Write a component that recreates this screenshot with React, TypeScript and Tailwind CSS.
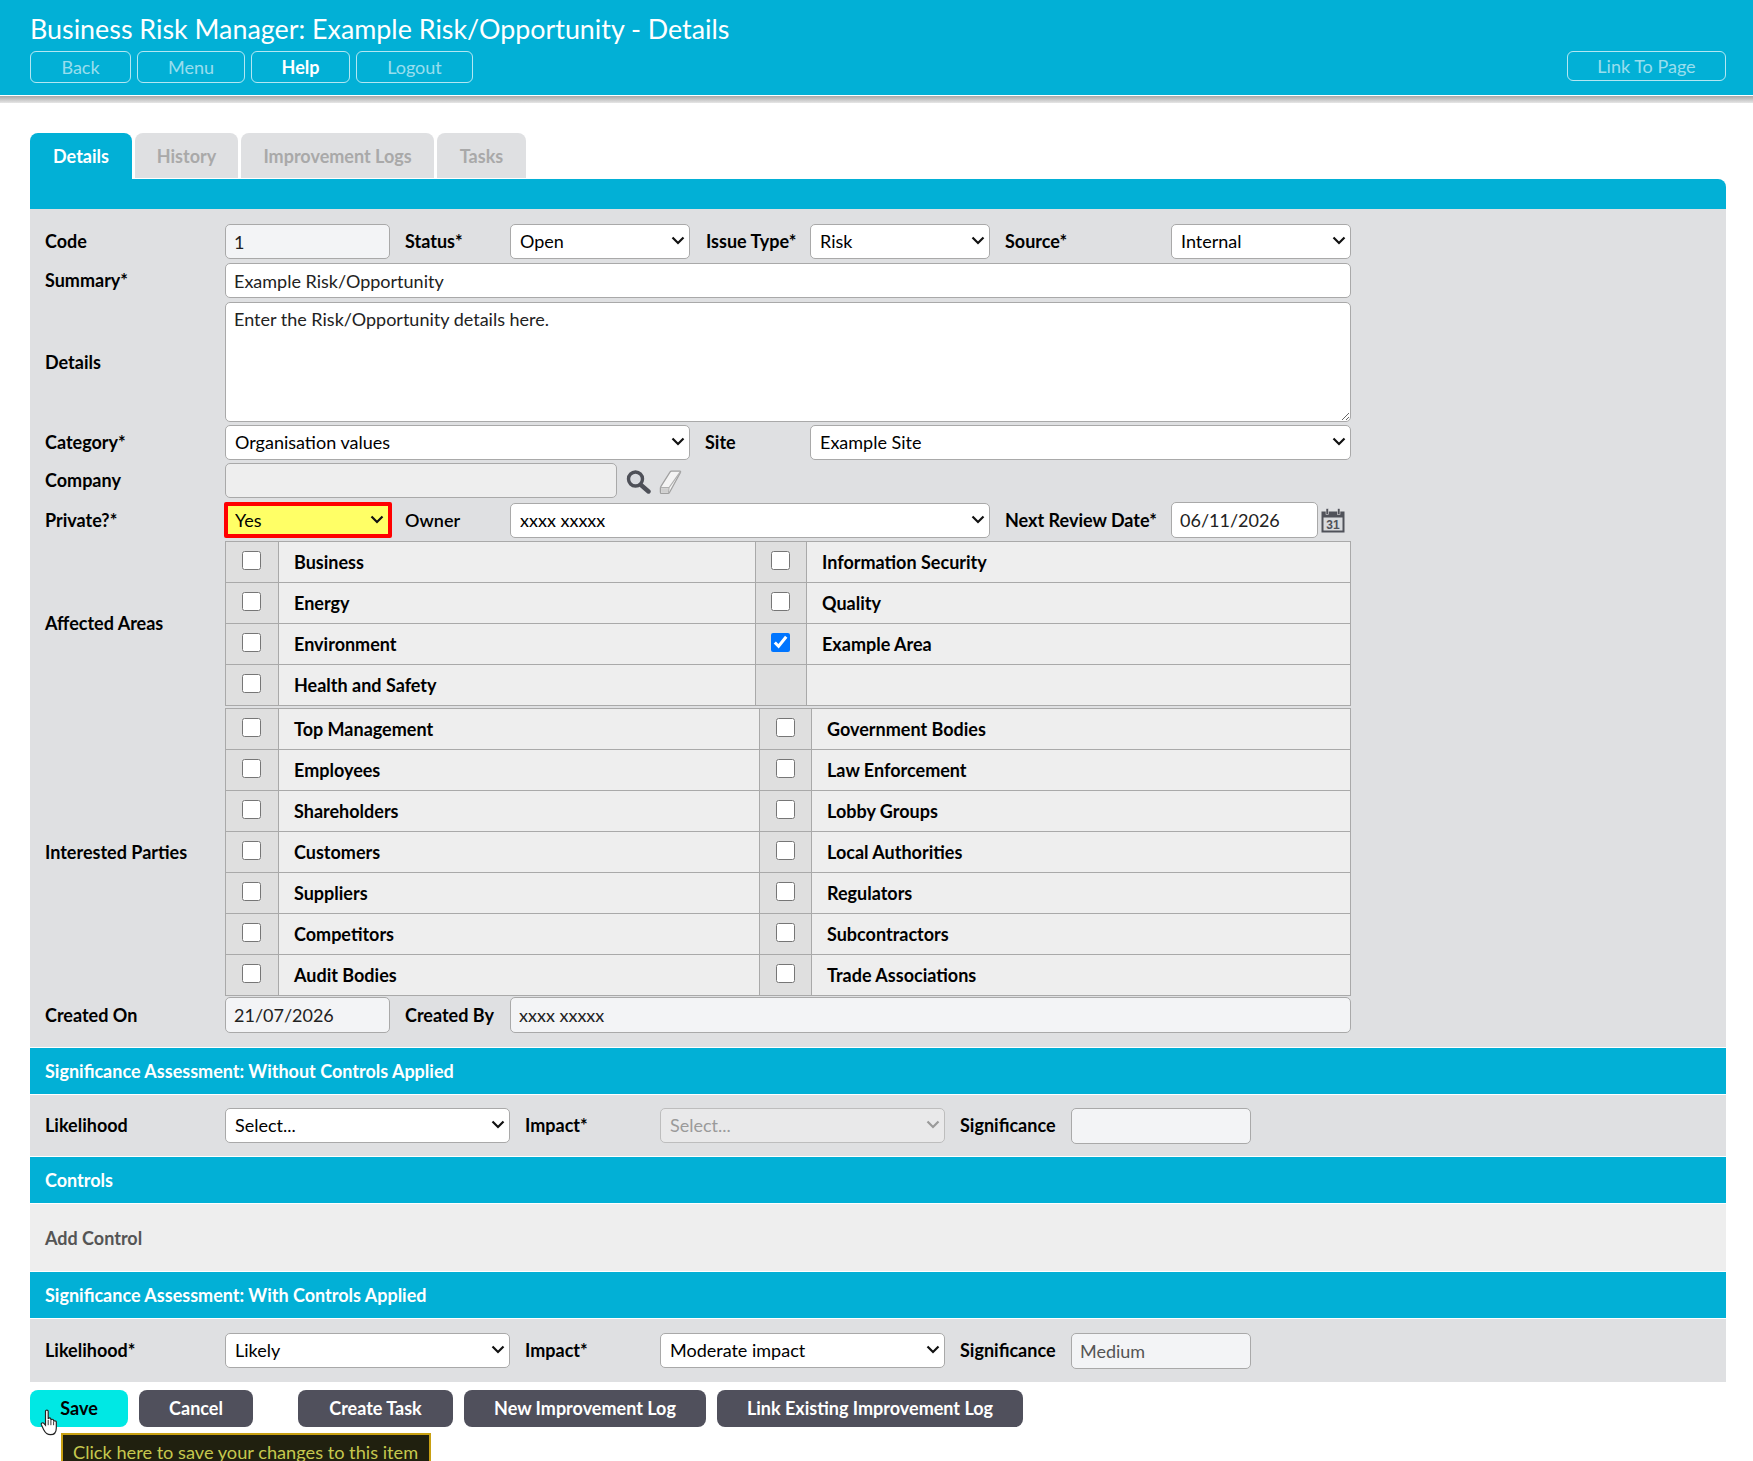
import React from "react";

const labelCls = "text-[18px] font-bold text-black whitespace-nowrap";
const inputCls = "h-[35px] rounded-[5px] border border-[#a9a9a9] px-[8px] text-[18px] text-[#222] outline-none";

function Sel({
  value,
  width,
  className = "",
  chevron = "right-[5px] top-[12px]",
  disabled,
}: {
  value: string;
  width: string;
  className?: string;
  chevron?: string;
  disabled?: boolean;
}) {
  return (
    <span className={`relative block h-[35px] ${width}`}>
      <select
        disabled={disabled}
        defaultValue={value}
        className={`h-full w-full appearance-none rounded-[5px] border border-[#a9a9a9] bg-white pl-[9px] text-[18px] text-black outline-none ${className}`}
      >
        <option>{value}</option>
      </select>
      <svg width="14" height="9" viewBox="0 0 14 9" className={`pointer-events-none absolute ${chevron}`} fill="none">
        <path d="M1.5 1.5 L7 7 L12.5 1.5" stroke={disabled ? "#9a9a9a" : "#111"} strokeWidth="2.2" />
      </svg>
    </span>
  );
}

function Cb({ checked }: { checked?: boolean }) {
  return <input type="checkbox" defaultChecked={checked} className="-ml-[1px] -mt-[3px] h-[19px] w-[19px]" />;
}

function CheckTable({
  rows,
  widths,
}: {
  rows: [string, string | null, boolean?][];
  widths: [string, string];
}) {
  return (
    <div className="w-[1126px] border-x border-t border-[#a9a9a9]">
      {rows.map(([a, b, checked]) => (
        <div key={a} className="flex h-[41px] border-b border-[#a9a9a9]">
          <div className="flex w-[53px] items-center justify-center border-r border-[#a9a9a9] bg-[#dfdfdf]">
            <Cb />
          </div>
          <div className={`flex items-center bg-[#eeeeee] pl-[15px] ${labelCls} ${widths[0]}`}>{a}</div>
          <div className={`flex items-center justify-center border-x border-[#a9a9a9] bg-[#dfdfdf] ${widths[1]}`}>
            {b !== null && <Cb checked={checked} />}
          </div>
          <div className={`flex flex-1 items-center bg-[#eeeeee] pl-[15px] ${labelCls}`}>{b}</div>
        </div>
      ))}
    </div>
  );
}

function SectionBar({ children }: { children: React.ReactNode }) {
  return (
    <div className="flex h-[48px] items-center border-y border-white bg-[#02b0d6] pl-[15px] text-[18px] font-bold text-white">
      {children}
    </div>
  );
}

function HeadBtn({ children, className }: { children: React.ReactNode; className: string }) {
  return (
    <button className={`rounded-[6px] border border-white/70 text-[18px] ${className}`}>{children}</button>
  );
}

function FootBtn({ children, className }: { children: React.ReactNode; className: string }) {
  return (
    <button className={`h-[37px] rounded-[8px] bg-[#50505c] text-[18px] font-bold text-white ${className}`}>
      {children}
    </button>
  );
}

function SearchIcon() {
  return (
    <svg width="25" height="24" viewBox="0 0 25 24" fill="none">
      <circle cx="9.5" cy="9" r="7" stroke="#4e5058" strokeWidth="3.4" fill="#d9dbe0" />
      <path d="M15 15 L22.5 21.5" stroke="#4e5058" strokeWidth="4.4" strokeLinecap="round" />
    </svg>
  );
}

function EraserIcon() {
  return (
    <svg width="23" height="24" viewBox="0 0 21 23">
      <path d="M11.5 1 L19.5 1 Q20.5 1 20 2.5 L9.5 21.5 Q9 22.5 8 22.5 L2 22.5 Q0.8 22.5 0.8 21 L0.8 17.5 Q0.8 16.5 1.5 15.5 L10 2 Q10.6 1 11.5 1 Z" fill="#f4f4f4" stroke="#a0a0a0" strokeWidth="1.2" />
      <path d="M1 17 L9 17 L20 1.5 M9 17 L8.6 22.3" fill="none" stroke="#b0b0b0" strokeWidth="1.2" />
      <path d="M1.4 17.6 L8.4 17.6 L8 21.8 L1.6 21.8 Z" fill="#cfcfcf" />
    </svg>
  );
}

function CalendarIcon() {
  return (
    <svg width="24" height="25" viewBox="0 0 24 25">
      <rect x="0.5" y="3.5" width="23" height="21" fill="#50525a" />
      <rect x="2.5" y="9.5" width="19" height="13" fill="#d9dbde" />
      <rect x="5" y="0.5" width="2.5" height="6" fill="#50525a" stroke="#dfe0e2" strokeWidth="0.6" />
      <rect x="16.5" y="0.5" width="2.5" height="6" fill="#50525a" stroke="#dfe0e2" strokeWidth="0.6" />
      <text x="12" y="21" textAnchor="middle" fontSize="12" fontWeight="700" fill="#50525a" fontFamily="Liberation Sans, sans-serif">31</text>
    </svg>
  );
}

function HandCursor() {
  return (
    <svg width="20" height="27" viewBox="0 0 22 30" className="absolute left-[10px] top-[19px]">
      <path
        d="M6 2.5 C6 0.8 9 0.8 9 2.5 L9 11 C9 9.5 12 9.5 12 11 L12 12.5 C12 11 15 11 15 12.5 L15 14 C15 12.8 18 12.8 18 14.2 L18 21 C18 25 16 28.5 11.5 28.5 C7 28.5 5.5 26 4 23 L1.4 17.5 C0.6 15.6 3 14.5 4.2 16 L6 18 Z"
        fill="#fff"
        stroke="#222"
        strokeWidth="1.3"
      />
      <path d="M9 12 V18 M12 12.5 V18 M15 14 V18" stroke="#222" strokeWidth="1" />
    </svg>
  );
}

export default function App() {
  return (
    <div className="relative h-[1461px] overflow-hidden bg-white font-['Lato','Liberation_Sans',sans-serif]">
      <header className="h-[95px] bg-[#02b0d6] pl-[30px] pr-[27px] pt-[11px]">
        <h1 className="h-[36px] text-[26.85px] leading-[36px] text-white">
          Business Risk Manager: Example Risk/Opportunity - Details
        </h1>
        <div className="mt-[4px] flex items-start justify-between">
          <div className="flex gap-[6px]">
            <HeadBtn className="h-[32px] w-[101px] text-white/60">Back</HeadBtn>
            <HeadBtn className="h-[32px] w-[108px] text-white/60">Menu</HeadBtn>
            <HeadBtn className="h-[32px] w-[99px] border-white font-bold text-white">Help</HeadBtn>
            <HeadBtn className="h-[32px] w-[117px] text-white/60">Logout</HeadBtn>
          </div>
          <HeadBtn className="h-[30px] w-[159px] text-white/60">Link To Page</HeadBtn>
        </div>
      </header>
      <div className="h-[8px] border-t border-white bg-gradient-to-b from-[#a8a8a8] to-[#e6e6e6]" />

      <main className="ml-[30px] mr-[27px] mt-[30px]">
        <div className="flex h-[46px] items-start gap-[3px] text-[18px] font-bold">
          <div className="flex h-[46px] w-[102px] items-center justify-center rounded-t-[8px] bg-[#02b0d6] pt-[1px] text-white">
            Details
          </div>
          <div className="flex h-[45px] w-[103px] items-center justify-center rounded-t-[8px] bg-[#dfe0e2] pt-[2px] text-[#a9a9a9]">
            History
          </div>
          <div className="flex h-[45px] w-[193px] items-center justify-center rounded-t-[8px] bg-[#dfe0e2] pt-[2px] text-[#a9a9a9]">
            Improvement Logs
          </div>
          <div className="flex h-[45px] w-[89px] items-center justify-center rounded-t-[8px] bg-[#dfe0e2] pt-[2px] text-[#a9a9a9]">
            Tasks
          </div>
        </div>
        <div className="h-[30px] rounded-tr-[8px] bg-[#02b0d6]" />

        <div className="bg-[#dfe0e2] pb-[14px] pt-[15px]">
          <div className="flex items-center pl-[15px]">
            <span className={`w-[180px] ${labelCls}`}>Code</span>
            <input readOnly value="1" className={`${inputCls} w-[165px] bg-[#f3f4f6]`} />
            <span className={`w-[120px] pl-[15px] ${labelCls}`}>Status*</span>
            <Sel value="Open" width="w-[180px]" />
            <span className={`w-[120px] pl-[16px] ${labelCls}`}>Issue Type*</span>
            <Sel value="Risk" width="w-[180px]" />
            <span className={`w-[181px] pl-[15px] ${labelCls}`}>Source*</span>
            <Sel value="Internal" width="w-[180px]" />
          </div>
          <div className="mt-[4px] flex items-center pl-[15px]">
            <span className={`w-[180px] ${labelCls}`}>Summary*</span>
            <input readOnly value="Example Risk/Opportunity" className={`${inputCls} w-[1126px] bg-white`} />
          </div>
          <div className="mt-[4px] flex items-center pl-[15px]">
            <span className={`w-[180px] ${labelCls}`}>Details</span>
            <textarea
              readOnly
              value="Enter the Risk/Opportunity details here."
              className={`${inputCls} h-[120px] w-[1126px] bg-white py-[3px]`}
            />
          </div>
          <div className="mt-[3px] flex items-center pl-[15px]">
            <span className={`w-[180px] ${labelCls}`}>Category*</span>
            <Sel value="Organisation values" width="w-[465px]" />
            <span className={`w-[120px] pl-[15px] ${labelCls}`}>Site</span>
            <Sel value="Example Site" width="w-[541px]" />
          </div>
          <div className="mt-[3px] flex items-center pl-[15px]">
            <span className={`w-[180px] ${labelCls}`}>Company</span>
            <input readOnly className={`${inputCls} w-[392px] bg-[#eeeeee]`} />
            <span className="ml-[9px] mt-[2px] flex items-center gap-[8px]">
              <SearchIcon />
              <EraserIcon />
            </span>
          </div>
          <div className="mt-[4px] flex items-center pl-[15px]">
            <span className={`w-[179px] ${labelCls}`}>Private?*</span>
            <Sel
              value="Yes"
              width="w-[168px] !h-[36px]"
              chevron="right-[8px] top-[13px]"
              className="!rounded-[2px] !border-[4px] !border-[#ff0000] !bg-[#ffff66] !pl-[7px]"
            />
            <span className="w-[118px] whitespace-nowrap pl-[13px] text-[18px] font-semibold text-black">Owner</span>
            <Sel value="xxxx xxxxx" width="w-[480px]" />
            <span className={`w-[181px] pl-[15px] ${labelCls}`}>Next Review Date*</span>
            <input readOnly value="06/11/2026" className={`${inputCls} h-[36px] w-[147px] bg-white`} />
            <span className="ml-[3px]">
              <CalendarIcon />
            </span>
          </div>

          <div className="mt-[3px] flex items-center pl-[15px]">
            <span className={`w-[180px] ${labelCls}`}>Affected Areas</span>
            <CheckTable
              widths={["w-[476px]", "w-[52px]"]}
              rows={[
                ["Business", "Information Security"],
                ["Energy", "Quality"],
                ["Environment", "Example Area", true],
                ["Health and Safety", null],
              ]}
            />
          </div>
          <div className="mt-[2px] flex items-center pl-[15px]">
            <span className={`w-[180px] ${labelCls}`}>Interested Parties</span>
            <CheckTable
              widths={["w-[480px]", "w-[53px]"]}
              rows={[
                ["Top Management", "Government Bodies"],
                ["Employees", "Law Enforcement"],
                ["Shareholders", "Lobby Groups"],
                ["Customers", "Local Authorities"],
                ["Suppliers", "Regulators"],
                ["Competitors", "Subcontractors"],
                ["Audit Bodies", "Trade Associations"],
              ]}
            />
          </div>

          <div className="mt-[1px] flex items-center pl-[15px]">
            <span className={`w-[180px] ${labelCls}`}>Created On</span>
            <input readOnly value="21/07/2026" className={`${inputCls} h-[36px] w-[165px] bg-[#f3f4f6]`} />
            <span className={`w-[120px] pl-[15px] ${labelCls}`}>Created By</span>
            <input readOnly value="xxxx xxxxx" className={`${inputCls} h-[36px] w-[841px] bg-[#f3f4f6]`} />
          </div>
        </div>

        <SectionBar>Significance Assessment: Without Controls Applied</SectionBar>
        <div className="flex h-[61px] items-center bg-[#dfe0e2] pl-[15px]">
          <span className={`w-[180px] ${labelCls}`}>Likelihood</span>
          <Sel value="Select..." width="w-[285px]" />
          <span className={`w-[150px] pl-[15px] ${labelCls}`}>Impact*</span>
          <Sel
            value="Select..."
            width="w-[285px]"
            disabled
            className="!border-[#bdbdbd] !bg-[#e9e9ea] !text-[#9a9a9a]"
          />
          <span className={`w-[126px] pl-[15px] ${labelCls}`}>Significance</span>
          <input readOnly className={`${inputCls} h-[36px] w-[180px] bg-[#f3f4f6]`} />
        </div>

        <SectionBar>Controls</SectionBar>
        <div className="flex h-[67px] items-center bg-[#eeeeee] pl-[15px] pt-[1px] text-[18px] font-bold text-[#555]">
          Add Control
        </div>

        <SectionBar>Significance Assessment: With Controls Applied</SectionBar>
        <div className="flex h-[63px] items-center bg-[#dfe0e2] pl-[15px]">
          <span className={`w-[180px] ${labelCls}`}>Likelihood*</span>
          <Sel value="Likely" width="w-[285px]" />
          <span className={`w-[150px] pl-[15px] ${labelCls}`}>Impact*</span>
          <Sel value="Moderate impact" width="w-[285px]" />
          <span className={`w-[126px] pl-[15px] ${labelCls}`}>Significance</span>
          <input readOnly value="Medium" className={`${inputCls} h-[36px] w-[180px] bg-[#f3f4f6] !text-[#555]`} />
        </div>

        <div className="relative mt-[8px] flex">
          <button className="relative h-[37px] w-[98px] rounded-[8px] bg-[#00e8e4] text-[18px] font-bold text-black">
            Save
            <HandCursor />
          </button>
          <FootBtn className="ml-[11px] w-[114px]">Cancel</FootBtn>
          <FootBtn className="ml-[45px] w-[155px]">Create Task</FootBtn>
          <FootBtn className="ml-[11px] w-[242px]">New Improvement Log</FootBtn>
          <FootBtn className="ml-[11px] w-[306px]">Link Existing Improvement Log</FootBtn>
          <div className="absolute left-[31px] top-[43px] h-[36px] w-[370px] whitespace-nowrap border-2 border-[#c8a012] bg-[#20200f] px-[10px] pt-[7px] text-[18.2px] leading-[20px] text-[#c6c84e]">
            Click here to save your changes to this item
          </div>
        </div>
      </main>
    </div>
  );
}
